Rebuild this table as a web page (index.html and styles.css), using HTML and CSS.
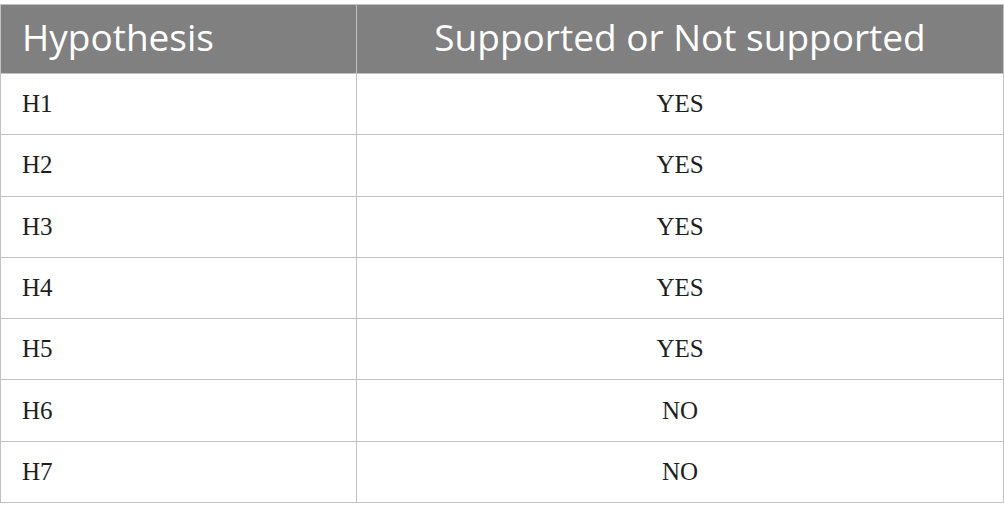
FILE: index.html
```html
<!DOCTYPE html>
<html>
<head>
<meta charset="utf-8">
<link rel="stylesheet" href="styles.css">
</head>
<body>
<div class="wrap">
<table class="tbl">
  <thead>
    <tr><th class="c1">Hypothesis</th><th class="c2">Supported or Not supported</th></tr>
  </thead>
  <tbody>
    <tr><td class="c1">H1</td><td class="c2">YES</td></tr>
    <tr><td class="c1">H2</td><td class="c2">YES</td></tr>
    <tr><td class="c1">H3</td><td class="c2">YES</td></tr>
    <tr><td class="c1">H4</td><td class="c2">YES</td></tr>
    <tr><td class="c1">H5</td><td class="c2">YES</td></tr>
    <tr><td class="c1">H6</td><td class="c2">NO</td></tr>
    <tr><td class="c1">H7</td><td class="c2">NO</td></tr>
  </tbody>
</table>
</div>
</body>
</html>
```
FILE: styles.css
```css
html, body {
  margin: 0;
  padding: 0;
  background: #ffffff;
}
.wrap {
  padding-top: 4px;
}
.tbl {
  width: 1004px;
  border-collapse: collapse;
  table-layout: fixed;
}
.tbl th, .tbl td {
  border: 1px solid #c2c2c2;
  padding: 0 0 0 21px;
  box-sizing: border-box;
}
.tbl .c1 {
  width: 356px;
  text-align: left;
}
.tbl .c2 {
  text-align: center;
  padding-left: 0;
}
.tbl th {
  background: #7f807f;
  color: #ffffff;
  font-family: "Open Sans", "Noto Sans", sans-serif;
  font-weight: 400;
  font-size: 37px;
  height: 69px;
  line-height: 42px;
  padding-top: 0;
  padding-bottom: 4px;
}
.tbl td {
  font-family: "Liberation Serif", "Times New Roman", serif;
  font-size: 25px;
  color: #1e1e1e;
  height: 61.3px;
  line-height: 28px;
}
```
